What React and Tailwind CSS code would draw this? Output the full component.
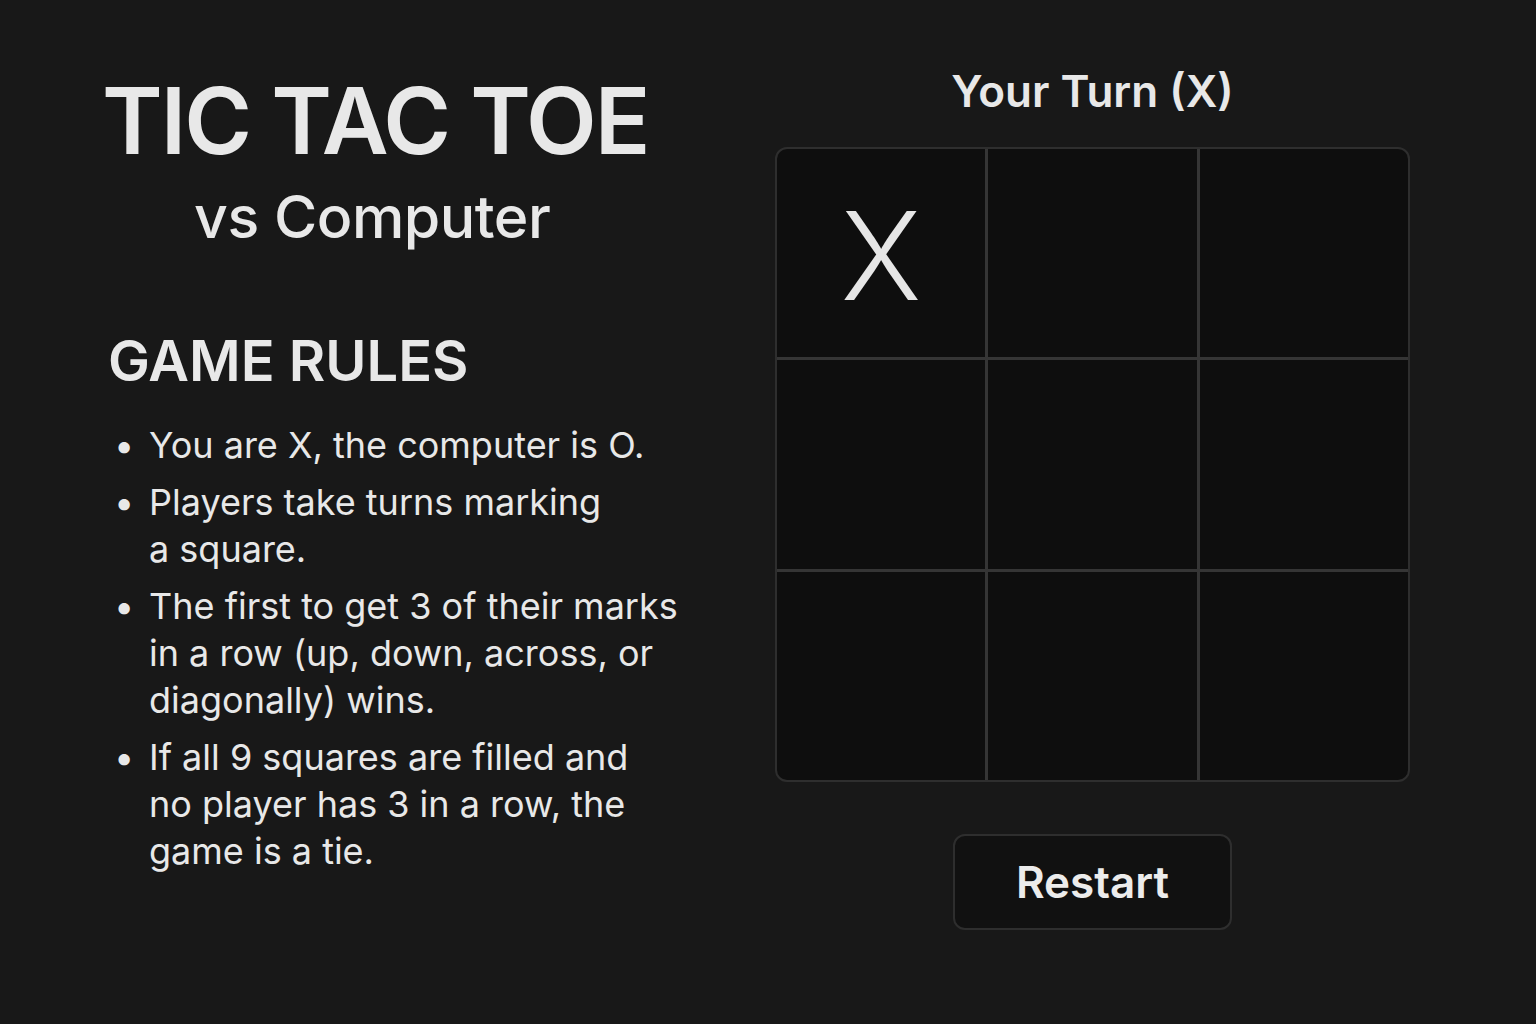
import React from "react";

export default function App() {
  const cells = ["X", "", "", "", "", "", "", "", ""];
  const rules = [
    "You are X, the computer is O.",
    "Players take turns marking a square.",
    "The first to get 3 of their marks in a row (up, down, across, or diagonally) wins.",
    "If all 9 squares are filled and no player has 3 in a row, the game is a tie.",
  ];
  return (
    <div
      className="w-[1536px] h-[1024px] bg-[#181818] text-[#e8e8e8] flex overflow-hidden"
      style={{ fontFamily: "Inter, 'Noto Sans', sans-serif" }}
    >
      <div className="w-[775px] shrink-0 pl-[102px] pt-[75px] flex flex-col">
        <div className="inline-flex flex-col items-center self-start">
          <h1 className="text-[92px] leading-none font-semibold tracking-[-2px] whitespace-nowrap">TIC TAC TOE</h1>
          <h2 className="mt-[20px] mr-[6px] text-[59px] leading-none font-medium tracking-[-0.5px] whitespace-nowrap">vs Computer</h2>
        </div>
        <h3 className="mt-[87px] ml-[6px] text-[56px] leading-none font-semibold whitespace-nowrap">GAME RULES</h3>
        <ul className="mt-[33px] ml-[3px] flex flex-col gap-[10px] w-[580px]">
          {rules.map((r, i) => (
            <li key={i} className="flex text-[36px] leading-[47px]">
              <span className="w-[44px] shrink-0 pl-[9px]">•</span>
              <span className={i === 1 ? "w-[470px]" : i === 3 ? "w-[500px]" : "w-[536px]"}>{r}</span>
            </li>
          ))}
        </ul>
      </div>
      <div className="w-[635px] shrink-0 pt-[69px] flex flex-col items-center">
        <div className="text-[44px] leading-none font-semibold whitespace-nowrap">Your Turn (X)</div>
        <div className="mt-[34px] w-[635px] h-[635px] rounded-xl border-2 border-[#2e2e2e] bg-[#353535] grid grid-cols-3 grid-rows-3 gap-[3px] overflow-hidden">
          {cells.map((c, i) => (
            <div
              key={i}
              className="bg-[#0e0e0e] flex items-center justify-center pt-[6px] text-[122px] leading-none font-light text-[#e6e6e6]"
            >
              {c}
            </div>
          ))}
        </div>
        <button className="mt-[52px] w-[279px] h-[96px] rounded-xl border-2 border-[#2e2e2e] bg-[#111111] text-[44px] font-semibold text-[#ececec]">
          Restart
        </button>
      </div>
    </div>
  );
}
